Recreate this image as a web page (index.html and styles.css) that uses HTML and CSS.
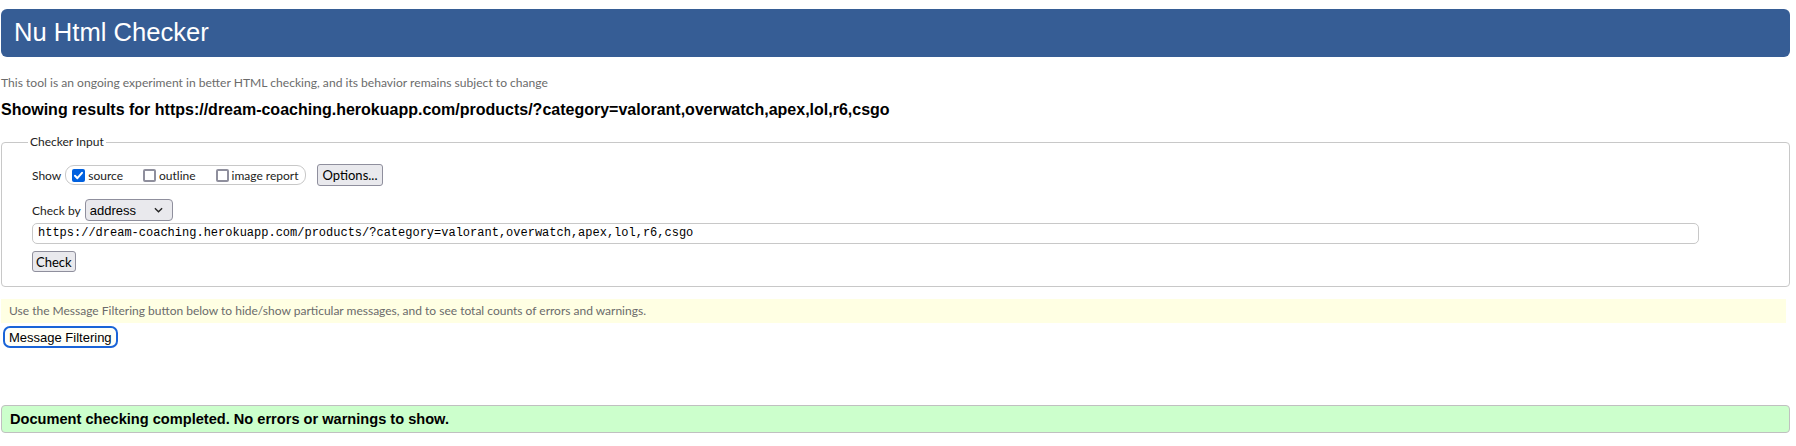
FILE: index.html
```html
<!DOCTYPE html>
<html lang="en">
<head>
<meta charset="utf-8">
<title>Nu Html Checker</title>
<link rel="stylesheet" href="styles.css">
</head>
<body>
<div class="page">
  <h1 class="title">Nu Html Checker</h1>
  <p class="about">This tool is an ongoing experiment in better HTML checking, and its behavior remains subject to change</p>
  <h2 class="results">Showing results for https://dream-coaching.herokuapp.com/products/?category=valorant,overwatch,apex,lol,r6,csgo</h2>
  <fieldset class="checker">
    <legend class="legend">Checker Input</legend>
    <div class="row show-row">
      <span class="lbl">Show</span>
      <span class="group">
        <span class="cb"><span class="box checked"><svg viewBox="0 0 13 13" width="13" height="13"><path d="M3 6.8 L5.4 9.2 L10 3.8" fill="none" stroke="#fff" stroke-width="2" stroke-linecap="round" stroke-linejoin="round"/></svg></span>source</span>
        <span class="cb"><span class="box"></span>outline</span>
        <span class="cb"><span class="box"></span>image report</span>
      </span>
      <span class="btn options">Options...</span>
    </div>
    <div class="row by-row">
      <span class="lbl">Check by</span>
      <span class="select"><span class="sel-text">address</span><svg viewBox="0 0 10 6" width="9" height="6"><path d="M1 1 L5 5 L9 1" fill="none" stroke="#222" stroke-width="1.5"/></svg></span>
    </div>
    <div class="url">https://dream-coaching.herokuapp.com/products/?category=valorant,overwatch,apex,lol,r6,csgo</div>
    <div class="row"><span class="btn check">Check</span></div>
  </fieldset>
  <p class="note">Use the Message Filtering button below to hide/show particular messages, and to see total counts of errors and warnings.</p>
  <div class="row"><span class="filter">Message Filtering</span></div>
  <p class="success">Document checking completed. No errors or warnings to show.</p>
</div>
</body>
</html>
```
FILE: styles.css
```css
html, body {
  margin: 0;
  padding: 0;
  background: #fff;
}
.page {
  padding: 9px 6px 0 1px;
  display: flex;
  flex-direction: column;
  align-items: stretch;
}
.title {
  margin: 0;
  height: 48px;
  line-height: 47px;
  padding-left: 13px;
  background: #365d95;
  color: #fff;
  font-family: "Liberation Sans", Arial, sans-serif;
  font-weight: normal;
  font-size: 25.6px;
  border-radius: 6px;
}
.about {
  margin: 18px 0 0 0;
  font-family: Lato, "Open Sans", sans-serif;
  font-size: 12.1px;
  line-height: 16px;
  color: #6b6b6b;
}
.results {
  margin: 9px 0 0 0;
  font-family: "Liberation Sans", Arial, sans-serif;
  font-weight: bold;
  font-size: 16px;
  line-height: 20px;
  color: #000;
}
.checker {
  margin: 14px 0 0 0;
  padding: 14px 0 14px 30px;
  border: 1px solid #c8c8c8;
  border-radius: 4px;
  min-width: 0;
  font-family: Lato, "Open Sans", sans-serif;
  font-size: 12px;
  color: #222;
}
.legend {
  margin-left: -4px;
  padding: 0 2px;
  line-height: 16px;
  font-size: 12px;
  color: #222;
}
.row {
  display: flex;
  align-items: center;
}
.show-row {
  height: 22px;
}
.lbl {
  margin-right: 4px;
}
.group {
  display: flex;
  align-items: center;
  height: 18px;
  padding: 0 6px;
  border: 1px solid #c8c8c8;
  border-radius: 9px;
  gap: 20px;
}
.cb {
  display: flex;
  align-items: center;
}
.box {
  width: 13px;
  height: 13px;
  box-sizing: border-box;
  border: 2px solid #8f8f9d;
  border-radius: 2px;
  margin-right: 3px;
  display: flex;
}
.box.checked {
  border: none;
  background: #0060df;
}
.btn {
  display: inline-flex;
  align-items: center;
  box-sizing: border-box;
  height: 22px;
  padding: 0 5px;
  border: 1px solid #8f8f9d;
  border-radius: 3px;
  background: #e9e9ed;
  font-size: 13px;
  color: #000;
}
.options {
  margin-left: 11px;
}
.by-row {
  margin-top: 13px;
  height: 22px;
}
.select {
  display: inline-flex;
  align-items: center;
  justify-content: space-between;
  box-sizing: border-box;
  width: 88px;
  height: 22px;
  padding: 0 9px 0 4px;
  border: 1px solid #8f8f9d;
  border-radius: 4px;
  background: #e9e9ed;
  font-family: "Liberation Sans", Arial, sans-serif;
  font-size: 13px;
  color: #000;
}
.url {
  margin: 2px 0 0 0;
  width: 1667px;
  box-sizing: border-box;
  height: 21px;
  line-height: 19px;
  padding: 0 5px;
  border: 1px solid #c8c8c8;
  border-radius: 5px;
  font-family: "Liberation Mono", monospace;
  font-size: 12px;
  color: #000;
}
.check {
  margin-top: 7px;
  height: 21px;
  padding: 0 3px;
}
.note {
  margin: 12px 4px 0 0;
  height: 24px;
  line-height: 24px;
  padding-left: 8px;
  background: #ffffe3;
  font-family: Lato, "Open Sans", sans-serif;
  font-size: 12px;
  color: #6b6b6b;
}
.filter {
  margin: 3px 0 0 2px;
  display: inline-flex;
  align-items: center;
  box-sizing: border-box;
  height: 22px;
  padding: 0 4px;
  border: 2px solid #1a64d8;
  border-radius: 7px;
  background: #fffff8;
  font-family: "Liberation Sans", Arial, sans-serif;
  font-size: 13px;
  color: #000;
}
.success {
  margin: 57px 0 0 0;
  height: 28px;
  box-sizing: border-box;
  line-height: 26px;
  padding-left: 8px;
  border: 1px solid #c0c0c0;
  border-radius: 4px;
  background: #ccffcc;
  font-family: "Liberation Sans", Arial, sans-serif;
  font-weight: bold;
  font-size: 14.6px;
  color: #000;
}
```
